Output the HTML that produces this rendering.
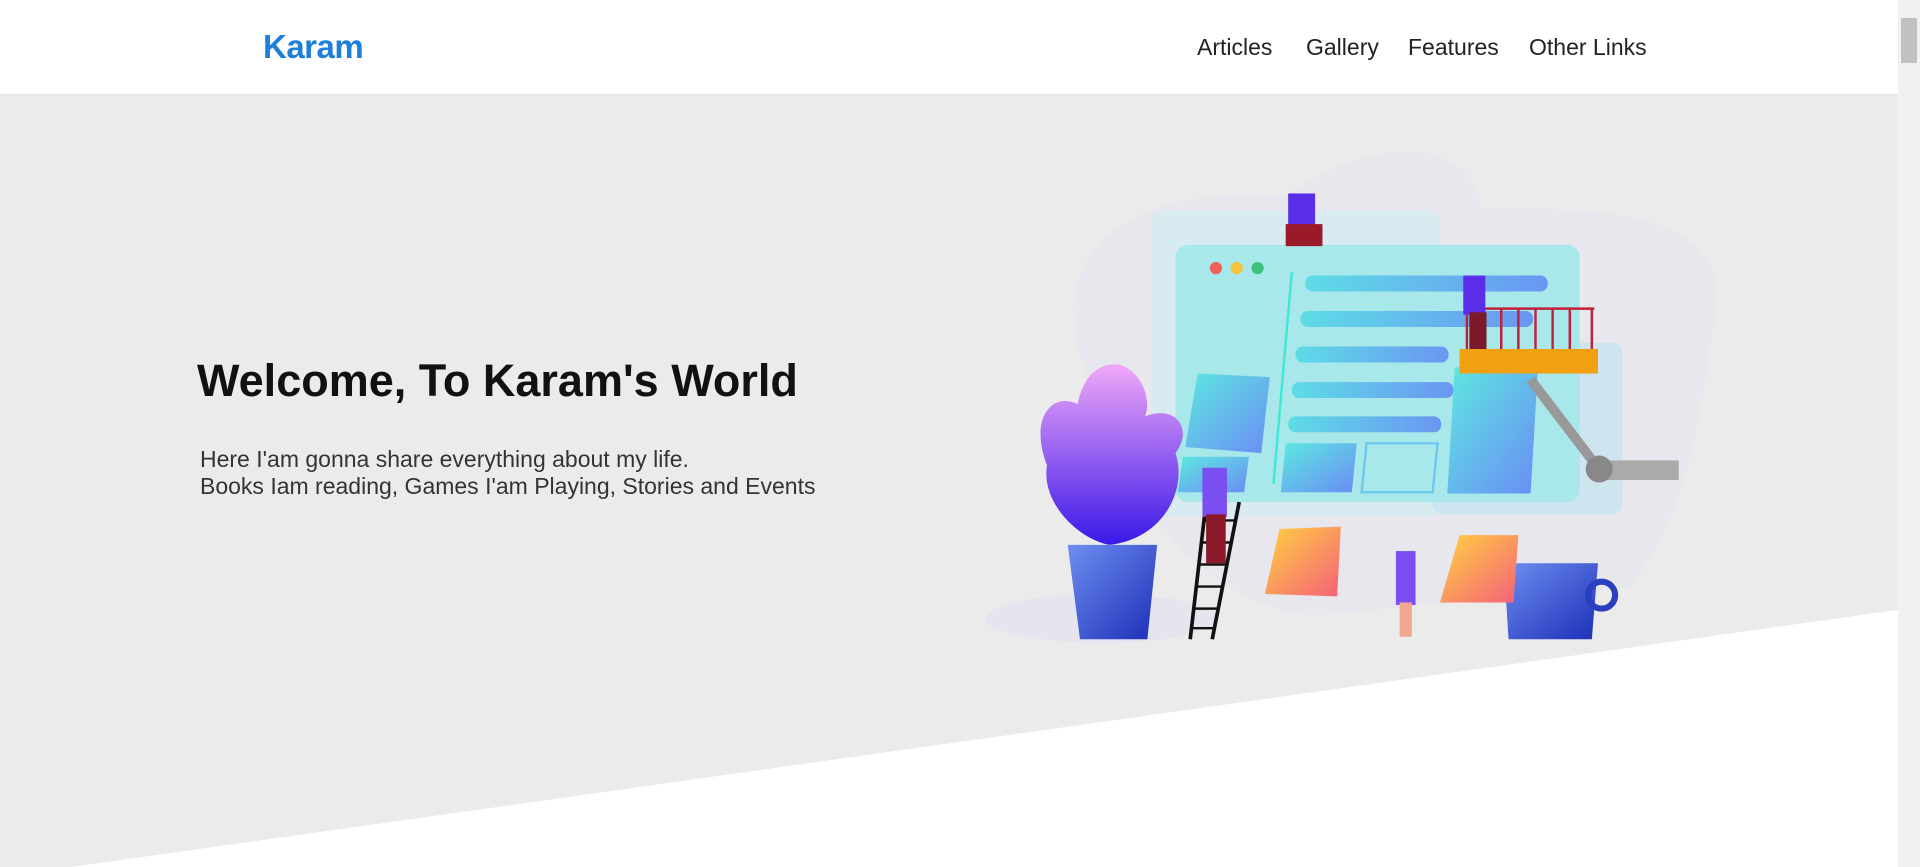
<!DOCTYPE html>
<html><head><meta charset="utf-8"><style>
html,body{margin:0;padding:0;width:1920px;height:867px;overflow:hidden;background:#ebebeb;font-family:"Liberation Sans",sans-serif}
.hdr{position:absolute;left:0;top:0;width:1898px;height:94px;background:#fff;border-bottom:1px solid #e4e4e4}
.logo{position:absolute;left:263px;top:28px;font-size:33px;font-weight:bold;color:#1e7fd8;letter-spacing:-0.5px}
.nav{position:absolute;top:34px;font-size:23px;color:#222}
h1{position:absolute;left:197px;top:355px;margin:0;font-size:45px;font-weight:bold;color:#111;letter-spacing:0px}
.p{position:absolute;left:200px;top:446px;font-size:23px;line-height:27px;color:#333}
svg.bg{position:absolute;left:0;top:0}
.sb{position:absolute;right:0;top:0;width:22px;height:867px;background:#f1f1f1}
.th{position:absolute;right:3px;top:18px;width:16px;height:45px;background:#c1c1c1}
</style></head><body>
<svg class="bg" width="1920" height="867" viewBox="0 0 1568 708" preserveAspectRatio="none">
<defs>
<linearGradient id="g1" x1="0" y1="0" x2="1" y2="1"><stop offset="0" stop-color="#5ee8e0"/><stop offset="1" stop-color="#6a8cf5"/></linearGradient>
<linearGradient id="g2" x1="0" y1="0" x2="1" y2="0"><stop offset="0" stop-color="#5edce6"/><stop offset="1" stop-color="#6a96f2"/></linearGradient>
<linearGradient id="lf" x1="0" y1="0" x2="0" y2="1"><stop offset="0" stop-color="#f0a8f8"/><stop offset="1" stop-color="#3a18e8"/></linearGradient>
<linearGradient id="pot" x1="0" y1="0" x2="1" y2="1"><stop offset="0" stop-color="#6f8ef0"/><stop offset="1" stop-color="#1b2fb8"/></linearGradient>
<linearGradient id="nt" x1="0" y1="0" x2="1" y2="1"><stop offset="0" stop-color="#ffd340"/><stop offset="1" stop-color="#f5607a"/></linearGradient>
</defs>
<polygon points="58,708 1550,498 1550,708" fill="#fff"/>
<path d="M880,280 C860,200 930,150 1050,160 C1120,110 1200,110 1210,170 C1300,170 1420,170 1400,260 C1390,330 1380,420 1330,480 L1100,500 C1000,520 900,400 880,280Z" fill="#e6e4ee" opacity="0.6"/>
<ellipse cx="900" cy="505" rx="95" ry="20" fill="#e6e4ef"/>
<rect x="940" y="172" width="236" height="250" rx="10" fill="#d3ecf0" opacity="0.8"/>
<rect x="1170" y="280" width="155" height="140" rx="8" fill="#c3e2f0" opacity="0.7"/>
<rect x="960" y="200" width="330" height="210" rx="10" fill="#a8e8ea"/>
<circle cx="993" cy="219" r="5" fill="#f0605a"/><circle cx="1010" cy="219" r="5" fill="#f5c43a"/><circle cx="1027" cy="219" r="5" fill="#3cc27a"/>
<line x1="1055" y1="222" x2="1040" y2="395" stroke="#40e8d8" stroke-width="2"/>
<rect x="1066" y="225" width="198" height="13" rx="6" fill="url(#g2)"/>
<rect x="1062" y="254" width="190" height="13" rx="6" fill="url(#g2)"/>
<rect x="1058" y="283" width="125" height="13" rx="6" fill="url(#g2)"/>
<rect x="1055" y="312" width="132" height="13" rx="6" fill="url(#g2)"/>
<rect x="1052" y="340" width="125" height="13" rx="6" fill="url(#g2)"/>
<polygon points="978,305 1037,308 1030,370 968,365" fill="url(#g1)"/>
<polygon points="966,373 1020,373 1016,402 962,402" fill="url(#g1)"/>
<polygon points="1050,362 1108,362 1104,402 1046,402" fill="url(#g1)"/>
<polygon points="1116,362 1174,362 1170,402 1112,402" fill="none" stroke="#6fc8ee" stroke-width="2"/>
<polygon points="1188,300 1256,300 1250,403 1182,403" fill="url(#g1)"/>
<path d="M906,445 C880,440 850,410 855,380 C840,340 860,320 880,330 C885,305 900,295 915,298 C935,305 940,330 935,340 C960,330 975,350 960,370 C970,400 950,440 906,445Z" fill="url(#lf)"/>
<polygon points="872,445 945,445 937,522 882,522" fill="url(#pot)"/>
<path d="M1228,460 L1305,460 L1300,522 L1232,522Z" fill="url(#pot)"/>
<circle cx="1308" cy="486" r="11" fill="none" stroke="#2b3fbf" stroke-width="5"/>
<path d="M1045,432 L1095,430 L1092,487 L1033,485Z" fill="url(#nt)"/>
<path d="M1192,437 L1240,437 L1236,492 L1176,492Z" fill="url(#nt)"/>
<g stroke="#111" stroke-width="3"><line x1="985" y1="410" x2="972" y2="522"/><line x1="1012" y1="410" x2="990" y2="522"/></g>
<g stroke="#111" stroke-width="2"><line x1="984" y1="425" x2="1008" y2="425"/><line x1="982" y1="443" x2="1005" y2="443"/><line x1="980" y1="461" x2="1001" y2="461"/><line x1="978" y1="479" x2="998" y2="479"/><line x1="976" y1="497" x2="995" y2="497"/><line x1="974" y1="513" x2="992" y2="513"/></g>
<rect x="1192" y="285" width="113" height="20" fill="#f0a010"/>
<g stroke="#c0203a" stroke-width="2"><line x1="1196" y1="252" x2="1302" y2="252"/><line x1="1198" y1="252" x2="1198" y2="285"/><line x1="1212" y1="252" x2="1212" y2="285"/><line x1="1226" y1="252" x2="1226" y2="285"/><line x1="1240" y1="252" x2="1240" y2="285"/><line x1="1254" y1="252" x2="1254" y2="285"/><line x1="1268" y1="252" x2="1268" y2="285"/><line x1="1282" y1="252" x2="1282" y2="285"/><line x1="1300" y1="252" x2="1300" y2="285"/></g>
<line x1="1250" y1="310" x2="1305" y2="382" stroke="#999" stroke-width="8"/>
<rect x="1305" y="376" width="66" height="16" fill="#aaa"/>
<circle cx="1306" cy="383" r="11" fill="#888"/>
<rect x="1052" y="158" width="22" height="28" fill="#5a2ee8"/><rect x="1050" y="183" width="30" height="18" fill="#9a1a2a"/>
<rect x="982" y="382" width="20" height="40" fill="#7a4ef0"/><rect x="985" y="420" width="16" height="40" fill="#8a1a2a"/>
<rect x="1195" y="225" width="18" height="32" fill="#5a2ee8"/><rect x="1200" y="255" width="14" height="30" fill="#7a1a2a"/>
<rect x="1140" y="450" width="16" height="44" fill="#7a4ef0"/><rect x="1143" y="492" width="10" height="28" fill="#f0a890"/>
</svg>
<div class="hdr"><div class="logo">Karam</div>
<div class="nav" style="left:1197px">Articles</div>
<div class="nav" style="left:1306px">Gallery</div>
<div class="nav" style="left:1408px">Features</div>
<div class="nav" style="left:1529px">Other Links</div>
</div>
<h1>Welcome, To Karam's World</h1>
<div class="p">Here I'am gonna share everything about my life.<br>Books Iam reading, Games I'am Playing, Stories and Events</div>
<div class="sb"><div class="th"></div></div>
</body></html>
